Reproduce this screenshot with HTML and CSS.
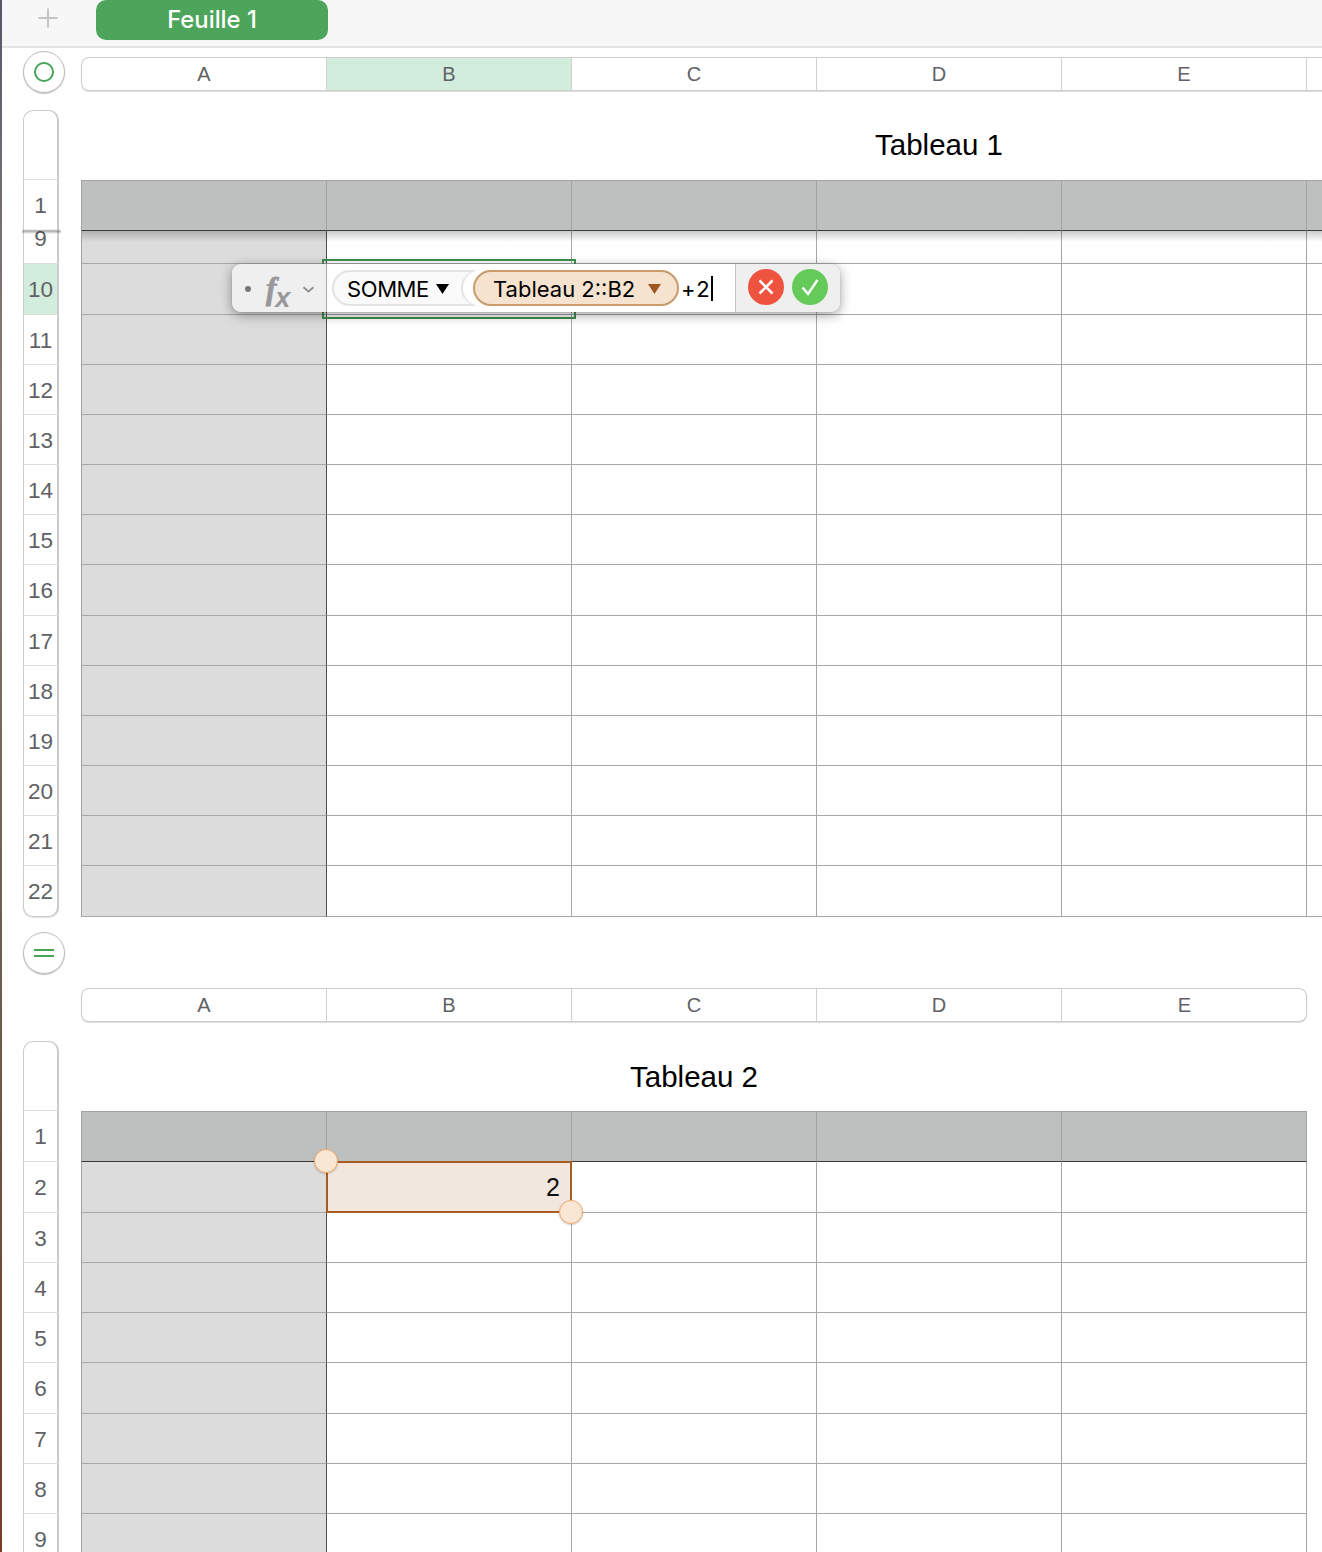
FILE: index.html
```html
<!DOCTYPE html>
<html lang="fr">
<head>
<meta charset="utf-8">
<title>Feuille 1</title>
<link rel="stylesheet" href="styles.css">
</head>
<body>
<div class="edge"></div>
<main class="app">
  <header class="tabbar">
    <svg class="plus" width="20" height="20" viewBox="0 0 20 20"><path d="M10 0.5V19.5M0.5 10H19.5" stroke="#c4c4c4" stroke-width="2" fill="none"/></svg>
    <div class="tab">Feuille 1</div>
  </header>

  <div class="headline">
    <div class="knob"><span class="ring"></span></div>
    <div class="cols wide">
      <div class="col first">A</div><div class="col on">B</div><div class="col">C</div><div class="col">D</div><div class="col">E</div><div class="col"></div><div class="col last"></div>
    </div>
  </div>

  <section class="block one">
    <div class="rail">
      <div class="rail-top"></div>
      <div class="num r51">1</div>
      <div class="num r33 clip"><span>9</span></div>
      <div class="num r51 on">10</div>
      <div class="num r50">11</div><div class="num r50">12</div><div class="num r50">13</div><div class="num r50">14</div><div class="num r50">15</div>
      <div class="num r51">16</div>
      <div class="num r50">17</div><div class="num r50">18</div><div class="num r50">19</div><div class="num r50">20</div><div class="num r50">21</div>
      <div class="num r51 end">22</div>
    </div>
    <div class="table wide">
      <h2 class="title">Tableau 1</h2>
      <div class="row r51 head"><i></i><i></i><i></i><i></i><i></i><i></i><i></i></div>
      <div class="row r33"><i></i><i></i><i></i><i></i><i></i><i></i><i></i></div>
      <div class="row r51"><i></i><i></i><i></i><i></i><i></i><i></i><i></i></div>
      <div class="row r50"><i></i><i></i><i></i><i></i><i></i><i></i><i></i></div>
      <div class="row r50"><i></i><i></i><i></i><i></i><i></i><i></i><i></i></div>
      <div class="row r50"><i></i><i></i><i></i><i></i><i></i><i></i><i></i></div>
      <div class="row r50"><i></i><i></i><i></i><i></i><i></i><i></i><i></i></div>
      <div class="row r50"><i></i><i></i><i></i><i></i><i></i><i></i><i></i></div>
      <div class="row r51"><i></i><i></i><i></i><i></i><i></i><i></i><i></i></div>
      <div class="row r50"><i></i><i></i><i></i><i></i><i></i><i></i><i></i></div>
      <div class="row r50"><i></i><i></i><i></i><i></i><i></i><i></i><i></i></div>
      <div class="row r50"><i></i><i></i><i></i><i></i><i></i><i></i><i></i></div>
      <div class="row r50"><i></i><i></i><i></i><i></i><i></i><i></i><i></i></div>
      <div class="row r50"><i></i><i></i><i></i><i></i><i></i><i></i><i></i></div>
      <div class="row r51"><i></i><i></i><i></i><i></i><i></i><i></i><i></i></div>
    </div>
  </section>

  <div class="knob mid"><span class="equals"></span></div>

  <div class="headline second">
    <div class="cols">
      <div class="col first">A</div><div class="col">B</div><div class="col">C</div><div class="col">D</div><div class="col last">E</div>
    </div>
  </div>

  <section class="block two">
    <div class="rail">
      <div class="rail-top"></div>
      <div class="num r51">1</div><div class="num r51">2</div><div class="num r50">3</div><div class="num r50">4</div><div class="num r50">5</div>
      <div class="num r51">6</div><div class="num r50">7</div><div class="num r50">8</div><div class="num r50">9</div>
    </div>
    <div class="table">
      <h2 class="title">Tableau 2</h2>
      <div class="row r51 head"><i></i><i></i><i></i><i></i><i></i></div>
      <div class="row r51"><i></i><i class="ref">2</i><i></i><i></i><i></i></div>
      <div class="row r50"><i></i><i></i><i></i><i></i><i></i></div>
      <div class="row r50"><i></i><i></i><i></i><i></i><i></i></div>
      <div class="row r50"><i></i><i></i><i></i><i></i><i></i></div>
      <div class="row r51"><i></i><i></i><i></i><i></i><i></i></div>
      <div class="row r50"><i></i><i></i><i></i><i></i><i></i></div>
      <div class="row r50"><i></i><i></i><i></i><i></i><i></i></div>
      <div class="row r50"><i></i><i></i><i></i><i></i><i></i></div>
    </div>
  </section>
</main>

<div class="freeze"></div>
<div class="freeze-rail"></div>
<div class="handle h-a"></div>
<div class="handle h-b"></div>
<div class="frame"></div>

<div class="editor">
  <div class="ed-left">
    <span class="dot"></span>
    <span class="fx"><span class="fx-f">f</span><span class="fx-x">x</span></span>
    <svg class="chev" width="13" height="7" viewBox="0 0 13 7"><path d="M1.5 1.2L6.5 5.5L11.5 1.2" stroke="#8f8f91" stroke-width="1.8" fill="none"/></svg>
  </div>
  <div class="ed-mid">
    <div class="token fn"><span class="fn-name">SOMME</span><svg class="tri" width="13" height="10" viewBox="0 0 13 10"><path d="M0 0H13L6.5 10Z" fill="#000"/></svg></div>
    <div class="token arg"><span>Tableau 2::B2</span><svg class="tri" width="13" height="10" viewBox="0 0 13 10"><path d="M0 0H13L6.5 10Z" fill="#a0561f"/></svg></div>
    <span class="typed">+2</span><span class="caret"></span>
  </div>
  <div class="ed-right">
    <span class="btn no"><svg width="20" height="20" viewBox="0 0 20 20"><path d="M3.5 3.5L16.5 16.5M16.5 3.5L3.5 16.5" stroke="#fff" stroke-width="2.6" fill="none"/></svg></span>
    <span class="btn yes"><svg width="20" height="20" viewBox="0 0 20 20"><path d="M2.5 10.5L8 17L17.5 3" stroke="#fff" stroke-width="2.4" fill="none"/></svg></span>
  </div>
</div>
</body>
</html>
```

FILE: styles.css
```css
* { box-sizing: border-box; }
html, body { margin: 0; height: 1552px; overflow: hidden; background: #fff; }
body { display: flex; font-family: "Liberation Sans", Arial, sans-serif; color: #000; }

.edge { width: 2px; flex: none; background: linear-gradient(#55566a 0, #6d6a72 10%, #8a7a70 25%, #6b6050 60%, #7a3b25 100%); }
.app { flex: 1; min-width: 0; overflow: hidden; }

.tabbar { height: 48px; background: #f7f7f7; border-bottom: 2px solid #e4e4e4; position: relative; display: flex; padding-left: 94px; }
.plus { position: absolute; left: 36px; top: 8px; }
.tab { width: 232px; height: 40px; border-radius: 10px; background: #4ca55b; color: #fff; font: 500 23.8px/40px Inter, sans-serif; text-align: center; }

.headline { display: flex; align-items: flex-start; padding: 3px 0 0 21px; height: 45px; }
.knob { width: 42px; height: 42px; flex: none; border-radius: 50%; background: #fff; border: 1px solid #bdbdbd; box-shadow: 0 1px 1px rgba(0,0,0,.22); display: flex; align-items: center; justify-content: center; }
.ring { width: 20px; height: 20px; border-radius: 50%; border: 2px solid #44a557; }
.equals { width: 20px; height: 8px; border-top: 2px solid #44a557; border-bottom: 2px solid #44a557; }
.knob.mid { margin: 15px 0 14px 21px; }

.cols { display: flex; flex: none; width: 1226px; height: 34px; margin: 6px 0 0 16px; border: 1px solid #cdcdcd; border-left: 0; border-radius: 8px; box-shadow: 0 1px 1px rgba(0,0,0,.14); background: #fff; }
.cols.wide { width: 1716px; }
.col { width: 245px; flex: none; border-right: 1px solid #d0d0d0; text-align: center; font: 400 20px/33px "Liberation Sans", sans-serif; color: #616165; }
.col.first { width: 246px; border-left: 1px solid #cdcdcd; border-radius: 8px 0 0 8px; }
.col.on { background: #d2ecdd; }
.col.last { border-right: 0; border-radius: 0 8px 8px 0; }

.second { padding: 0 0 0 63px; height: 34px; }
.second .cols { margin: 0 0 0 16px; }

.block { display: flex; align-items: flex-start; padding-left: 21px; }
.block.one { margin-top: 17px; }
.block.two { margin-top: 19px; }

.rail { width: 36px; flex: none; margin-right: 22px; }
.rail-top { height: 70px; border: 1px solid #cbcbcb; border-bottom: 1px solid #dedede; border-radius: 10px 10px 0 0; border-width: 1px 2px 1px 1px; }
.num { padding-top: 2px; border-left: 1px solid #cbcbcb; border-right: 2px solid #cbcbcb; border-bottom: 1px solid #dedede; display: flex; align-items: center; justify-content: center; font-size: 22.5px; color: #616165; background: #fff; }
.num.on { background: #d2ecdd; }
.num.clip { overflow: hidden; align-items: flex-end; padding-top: 0; }
.num.clip span { display: block; line-height: 50px; height: 50px; flex: none; margin-bottom: -1px; }
.num.end { border-radius: 0 0 10px 10px; border-bottom: 1px solid #cbcbcb; box-shadow: 0 1px 1px rgba(0,0,0,.12); }

.r33 { height: 33px; }
.r50 { height: 50px; }
.r51 { height: 51px; }

.table { width: 1226px; flex: none; }
.table.wide { width: 1716px; }
.title { height: 70px; margin: 0; text-align: center; font: 400 29.5px/70px "Liberation Sans", sans-serif; }
.two .title { line-height: 72px; }

.row { display: flex; }
.row i { display: block; width: 245px; flex: none; height: 100%; border-right: 1px solid #a7a7a7; border-bottom: 1px solid #a7a7a7; font-style: normal; }
.row i:first-child { width: 246px; background: #dcdcdc; border-left: 1px solid #a3a3a3; border-right-color: #4e4e4e; }
.row.head { background: #bec0bf; }
.row.head i, .row.head i:first-child { background: #bec0bf; border-right-color: #a3a3a3; border-top: 1px solid #a3a3a3; border-bottom-color: #3a3a3a; }

.row i.ref { background: #f1e7de; border: 2px solid #a95c22; margin: -1px 0 0 -1px; width: 246px; height: calc(100% + 1px); font: 400 25px/48px "Liberation Sans", sans-serif; text-align: right; padding-right: 10px; color: #111; }

.freeze { position: absolute; left: 82px; right: 0; top: 231px; height: 11px; background: linear-gradient(rgba(0,0,0,.2), rgba(0,0,0,0)); }
.freeze-rail { position: absolute; left: 22px; top: 229px; width: 39px; height: 5px; background: linear-gradient(rgba(0,0,0,0), rgba(0,0,0,.28) 50%, rgba(0,0,0,0)); }

.handle { position: absolute; width: 24px; height: 24px; border-radius: 50%; background: #f9e6d5; border: 1px solid #f0a868; box-shadow: 0 1px 2px rgba(0,0,0,.18); }
.h-a { left: 314px; top: 1149px; }
.h-b { left: 559px; top: 1200px; }

.frame { position: absolute; left: 322px; top: 259px; width: 254px; height: 60px; border: 2px solid #3f8f4f; }

.editor { position: absolute; left: 232px; top: 264px; width: 608px; height: 48px; display: flex; border-radius: 9px; overflow: hidden; background: #fff; box-shadow: 0 3px 12px rgba(0,0,0,.38), 0 0 1px rgba(0,0,0,.3); }
.ed-left { width: 95px; flex: none; background: #efefef; border-right: 1px solid #a9a9a9; display: flex; align-items: center; position: relative; padding-left: 13px; }
.dot { width: 6px; height: 6px; border-radius: 50%; background: #77777a; margin-top: 2px; }
.fx { width: 36px; flex: none; margin-left: 15px; color: #98989a; display: flex; align-items: baseline; }
.fx-f { font: italic 700 31px/1 "Liberation Serif", serif; -webkit-text-stroke: .8px #98989a; }
.fx-x { font: italic 700 27px/1 "Liberation Sans", sans-serif; margin-left: -1px; position: relative; top: 8px; }
.chev { margin-top: 3px; }

.ed-mid { flex: 1; min-width: 0; display: flex; align-items: center; padding-left: 5px; font: 400 22px/1 Inter, "Liberation Sans", sans-serif; position: relative; }
.token { height: 36px; display: flex; align-items: center; white-space: nowrap; padding-top: 1px; }
.fn { width: 142px; border: 2px solid #e3e3e3; border-right: 0; border-radius: 18px 0 0 18px; background: #fafafa; padding-left: 13px; }
.fn-name { letter-spacing: -.4px; }
.fn .tri { margin-left: 7px; }
.arg { width: 206px; margin-left: -1px; border: 2px solid #c99b6b; border-radius: 18px; background: #f5e2cf; padding-left: 18px; position: relative; box-shadow: -10px 0 0 #fff, -12px 0 0 #e3e3e3; }
.arg .tri { margin-left: 13px; }
.typed { margin-left: 2px; letter-spacing: 1.5px; padding-top: 1px; }
.caret { width: 2px; height: 25px; background: #000; }

.ed-right { width: 105px; flex: none; background: #efefef; border-left: 1px solid #c4c4c4; display: flex; align-items: center; padding: 0 0 2px 12px; gap: 8px; }
.btn { width: 36px; height: 36px; border-radius: 50%; display: flex; align-items: center; justify-content: center; }
.no { background: #ee5340; }
.yes { background: #64cb5a; }
```
